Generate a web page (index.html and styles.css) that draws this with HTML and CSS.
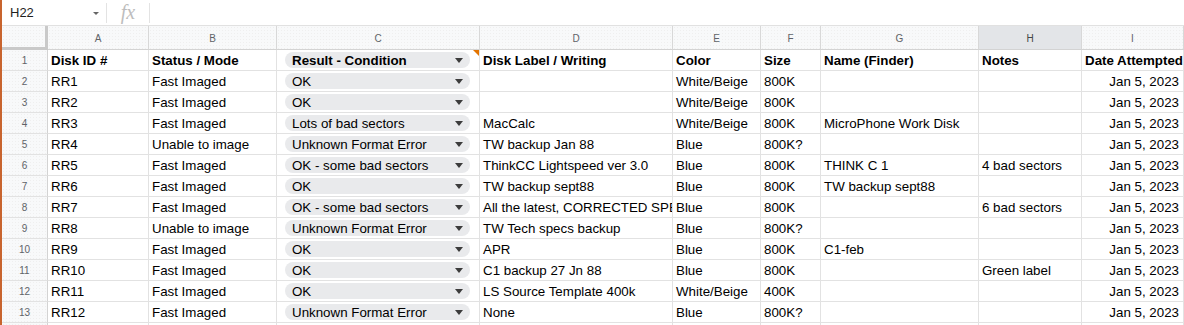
FILE: index.html
```html
<!DOCTYPE html>
<html lang="en">
<head>
<meta charset="utf-8">
<title>Disk imaging log</title>
<link rel="stylesheet" href="styles.css">
</head>
<body>
<div class="formula-bar">
  <div class="namebox"><span class="name">H22</span><span class="caret"></span></div>
  <div class="sep"></div>
  <div class="fx">fx</div>
  <div class="sep"></div>
</div>
<div class="sheet">
  <div class="row colheads">
    <div class="corner"></div><div>A</div><div>B</div><div>C</div><div>D</div><div>E</div><div>F</div><div>G</div><div class="sel">H</div><div>I</div>
  </div>
  <div class="row bold">
    <div class="rh">1</div><div>Disk ID #</div><div>Status / Mode</div><div class="note"><span class="chip"><span>Result - Condition</span><i class="arrow"></i></span></div><div>Disk Label / Writing</div><div>Color</div><div>Size</div><div>Name (Finder)</div><div>Notes</div><div class="over">Date Attempted</div>
  </div>
  <div class="row">
    <div class="rh">2</div><div>RR1</div><div>Fast Imaged</div><div><span class="chip"><span>OK</span><i class="arrow"></i></span></div><div></div><div>White/Beige</div><div>800K</div><div></div><div></div><div class="r">Jan 5, 2023</div>
  </div>
  <div class="row">
    <div class="rh">3</div><div>RR2</div><div>Fast Imaged</div><div><span class="chip"><span>OK</span><i class="arrow"></i></span></div><div></div><div>White/Beige</div><div>800K</div><div></div><div></div><div class="r">Jan 5, 2023</div>
  </div>
  <div class="row">
    <div class="rh">4</div><div>RR3</div><div>Fast Imaged</div><div><span class="chip"><span>Lots of bad sectors</span><i class="arrow"></i></span></div><div>MacCalc</div><div>White/Beige</div><div>800K</div><div>MicroPhone Work Disk</div><div></div><div class="r">Jan 5, 2023</div>
  </div>
  <div class="row">
    <div class="rh">5</div><div>RR4</div><div>Unable to image</div><div><span class="chip"><span>Unknown Format Error</span><i class="arrow"></i></span></div><div>TW backup Jan 88</div><div>Blue</div><div>800K?</div><div></div><div></div><div class="r">Jan 5, 2023</div>
  </div>
  <div class="row">
    <div class="rh">6</div><div>RR5</div><div>Fast Imaged</div><div><span class="chip"><span>OK - some bad sectors</span><i class="arrow"></i></span></div><div>ThinkCC Lightspeed ver 3.0</div><div>Blue</div><div>800K</div><div>THINK C 1</div><div>4 bad sectors</div><div class="r">Jan 5, 2023</div>
  </div>
  <div class="row">
    <div class="rh">7</div><div>RR6</div><div>Fast Imaged</div><div><span class="chip"><span>OK</span><i class="arrow"></i></span></div><div>TW backup sept88</div><div>Blue</div><div>800K</div><div>TW backup sept88</div><div></div><div class="r">Jan 5, 2023</div>
  </div>
  <div class="row">
    <div class="rh">8</div><div>RR7</div><div>Fast Imaged</div><div><span class="chip"><span>OK - some bad sectors</span><i class="arrow"></i></span></div><div class="clip">All the latest, CORRECTED SPECS</div><div>Blue</div><div>800K</div><div></div><div>6 bad sectors</div><div class="r">Jan 5, 2023</div>
  </div>
  <div class="row">
    <div class="rh">9</div><div>RR8</div><div>Unable to image</div><div><span class="chip"><span>Unknown Format Error</span><i class="arrow"></i></span></div><div>TW Tech specs backup</div><div>Blue</div><div>800K?</div><div></div><div></div><div class="r">Jan 5, 2023</div>
  </div>
  <div class="row">
    <div class="rh">10</div><div>RR9</div><div>Fast Imaged</div><div><span class="chip"><span>OK</span><i class="arrow"></i></span></div><div>APR</div><div>Blue</div><div>800K</div><div>C1-feb</div><div></div><div class="r">Jan 5, 2023</div>
  </div>
  <div class="row">
    <div class="rh">11</div><div>RR10</div><div>Fast Imaged</div><div><span class="chip"><span>OK</span><i class="arrow"></i></span></div><div>C1 backup 27 Jn 88</div><div>Blue</div><div>800K</div><div></div><div>Green label</div><div class="r">Jan 5, 2023</div>
  </div>
  <div class="row">
    <div class="rh">12</div><div>RR11</div><div>Fast Imaged</div><div><span class="chip"><span>OK</span><i class="arrow"></i></span></div><div>LS Source Template 400k</div><div>White/Beige</div><div>400K</div><div></div><div></div><div class="r">Jan 5, 2023</div>
  </div>
  <div class="row">
    <div class="rh">13</div><div>RR12</div><div>Fast Imaged</div><div><span class="chip"><span>Unknown Format Error</span><i class="arrow"></i></span></div><div>None</div><div>Blue</div><div>800K?</div><div></div><div></div><div class="r">Jan 5, 2023</div>
  </div>
  <div class="row">
    <div class="rh"></div><div></div><div></div><div></div><div></div><div></div><div></div><div></div><div></div><div></div>
  </div>
</div>
</body>
</html>
```
FILE: styles.css
```css
html, body {
  margin: 0;
  padding: 0;
}

body {
  height: 325px;
  overflow: hidden;
  border-left: 2px solid #c8642e;
  background: #ffffff;
  font-family: "Liberation Sans", Arial, sans-serif;
  font-size: 13.33px;
  color: #000000;
}

/* ---------- formula bar ---------- */
.formula-bar {
  height: 25px;
  border-bottom: 1px solid #e1e1e1;
  display: flex;
  align-items: center;
}

.namebox {
  width: 104px;
  box-sizing: border-box;
  padding: 0 7px 0 8px;
  display: flex;
  align-items: center;
  justify-content: space-between;
}

.name {
  font-size: 13px;
  color: #1f1f1f;
}

.caret {
  width: 0;
  height: 0;
  border-left: 3px solid transparent;
  border-right: 3px solid transparent;
  border-top: 3px solid #666666;
  margin-top: 1px;
}

.sep {
  width: 1px;
  height: 20px;
  background: #e3e3e3;
}

.fx {
  width: 42px;
  text-align: center;
  font-family: "Liberation Serif", "DejaVu Serif", serif;
  font-style: italic;
  font-size: 20px;
  color: #bdbdbd;
  line-height: 25px;
}

/* ---------- sheet ---------- */
.row {
  display: grid;
  grid-template-columns: 46px 101px 128px 203px 193px 88px 60px 158px 103px 102px;
  height: 21px;
}

.row > div {
  box-sizing: border-box;
  border-right: 1px solid #e2e2e2;
  border-bottom: 1px solid #e2e2e2;
  display: flex;
  align-items: center;
  padding: 1px 3px 0 3px;
  white-space: nowrap;
  overflow: hidden;
}

.row > div.over {
  overflow: visible;
}

.row > div.clip {
  display: block;
  line-height: 19px;
}

.bold > div {
  font-weight: bold;
}

.colheads {
  height: 24px;
}

.colheads > div {
  justify-content: center;
  font-size: 10px;
  color: #5f6368;
  background-color: #f8f9fa;
  background-image: radial-gradient(circle, #efefef 0.7px, transparent 0.8px);
  background-size: 3px 3px;
  border-right-color: #d8d8d8;
  border-bottom-color: #d3d3d3;
}

.colheads > div.sel {
  background-color: #e3e5e8;
  background-image: none;
  color: #444746;
}

.colheads > div.corner {
  border-right: 3px solid #c9c9c9;
  border-bottom: 3px solid #c9c9c9;
}

.row > div.rh {
  justify-content: center;
  font-size: 10px;
  font-weight: normal;
  color: #5f6368;
  background-color: #f8f9fa;
  background-image: radial-gradient(circle, #efefef 0.7px, transparent 0.8px);
  background-size: 3px 3px;
  border-right-color: #d3d3d3;
}

.row > div.r {
  justify-content: flex-end;
  padding-right: 4px;
}

/* dropdown chip */
.chip {
  width: 185px;
  height: 16px;
  margin: 0 0 1px 5px;
  box-sizing: border-box;
  padding: 0 7px;
  border-radius: 8px;
  background: #e9eaec;
  display: flex;
  align-items: center;
  justify-content: space-between;
}

.arrow {
  width: 0;
  height: 0;
  border-left: 4px solid transparent;
  border-right: 4px solid transparent;
  border-top: 5px solid #3c3c3c;
}

/* note indicator */
.row > div.note {
  position: relative;
}

.note::after {
  content: "";
  position: absolute;
  top: 0;
  right: 0;
  width: 0;
  height: 0;
  border-left: 6px solid transparent;
  border-top: 6px solid #e37400;
}
```
